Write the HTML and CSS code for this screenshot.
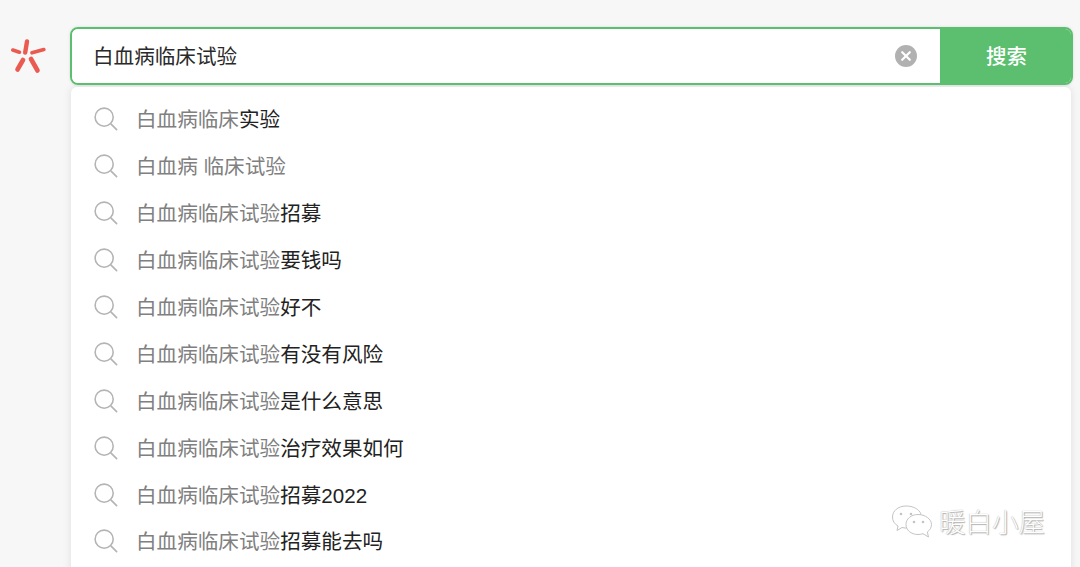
FILE: index.html
```html
<!DOCTYPE html>
<html lang="zh">
<head>
<meta charset="utf-8">
<title>搜索</title>
<link rel="stylesheet" href="styles.css">
</head>
<body>
<div class="page">
  <header class="top">
    <svg class="logo" width="36" height="36" viewBox="0 0 36 36">
      <g stroke="#ea5a50" stroke-linecap="round" fill="none">
        <path d="M17 3.500 L15.200 14.500" stroke-width="4.400"/>
        <path d="M2.800 12 L9.500 14.200" stroke-width="3.600"/>
        <path d="M33.800 11.500 L22 14.800" stroke-width="3.600"/>
        <path d="M13 22 L7.500 31.500" stroke-width="4.600"/>
        <path d="M21 21 L27.500 32.500" stroke-width="4.600"/>
      </g>
    </svg>
    <div class="box">
      <div class="field">
        <span class="query">白血病临床试验</span>
        <svg class="clear" width="24" height="24" viewBox="0 0 24 24">
          <circle cx="12" cy="12" r="11" fill="#b1b1b1"/>
          <path d="M8.200 8.200 L15.800 15.800 M15.800 8.200 L8.200 15.800" stroke="#fff" stroke-width="2.200" stroke-linecap="round"/>
        </svg>
      </div>
      <div class="btn">搜索</div>
    </div>
  </header>
  <ul class="list">
    <li class="row"><svg class="ico"><use href="#s"/></svg><span class="t">白血病临床<b>实验</b></span></li>
    <li class="row"><svg class="ico"><use href="#s"/></svg><span class="t">白血病 临床试验</span></li>
    <li class="row"><svg class="ico"><use href="#s"/></svg><span class="t">白血病临床试验<b>招募</b></span></li>
    <li class="row"><svg class="ico"><use href="#s"/></svg><span class="t">白血病临床试验<b>要钱吗</b></span></li>
    <li class="row"><svg class="ico"><use href="#s"/></svg><span class="t">白血病临床试验<b>好不</b></span></li>
    <li class="row"><svg class="ico"><use href="#s"/></svg><span class="t">白血病临床试验<b>有没有风险</b></span></li>
    <li class="row"><svg class="ico"><use href="#s"/></svg><span class="t">白血病临床试验<b>是什么意思</b></span></li>
    <li class="row"><svg class="ico"><use href="#s"/></svg><span class="t">白血病临床试验<b>治疗效果如何</b></span></li>
    <li class="row"><svg class="ico"><use href="#s"/></svg><span class="t">白血病临床试验<b>招募2022</b></span></li>
    <li class="row"><svg class="ico"><use href="#s"/></svg><span class="t">白血病临床试验<b>招募能去吗</b></span></li>
  </ul>
  <div class="mark">
    <svg width="46" height="36" viewBox="0 0 46 36">
      <g fill="#fff" stroke="#c4c4c4" stroke-width="1">
        <path d="M15 2 C7 2 1.500 7 1.500 13 C1.500 17 3.500 20 7 22 L6 26.500 L11 23.500 C13 24 15 24.200 17 24 L30 10 C28 5 22 2 15 2Z"/>
        <path d="M27 10.500 C20 10.500 15 15 15 20.500 C15 26 20 30.500 27 30.500 C29 30.500 30.500 30.200 32 29.700 L37.500 33 L36.300 28 C39 26 40.500 23.500 40.500 20.500 C40.500 15 34 10.500 27 10.500Z"/>
      </g>
      <circle cx="10" cy="10" r="1.300" fill="#c4c4c4"/>
      <circle cx="20" cy="10" r="1.300" fill="#c4c4c4"/>
      <circle cx="23" cy="18" r="1.300" fill="#c4c4c4"/>
      <circle cx="32" cy="18" r="1.300" fill="#c4c4c4"/>
    </svg>
    <span class="name">暖白小屋</span>
  </div>
</div>
<svg class="defs" width="0" height="0">
  <symbol id="s" viewBox="0 0 26 26">
    <circle cx="11" cy="11" r="9.800" fill="none" stroke="#b4b4b4" stroke-width="1.700"/>
    <path d="M18.500 18.500 L24.500 24.500" stroke="#b4b4b4" stroke-width="1.800" stroke-linecap="round"/>
  </symbol>
</svg>
</body>
</html>
```
FILE: styles.css
```css
* { box-sizing: border-box; }
html, body { margin: 0; height: 100%; }
body {
  background: #f7f7f7;
  font-family: "Liberation Sans", "Noto Sans CJK SC", sans-serif;
  overflow: hidden;
}
.page { position: relative; height: 567px; overflow: hidden; padding: 27px 7px 0 0; }
.top { display: flex; align-items: center; height: 58px; }
.logo { width: 36px; height: 36px; margin: 0 24px 0 10px; flex: none; }
.box {
  flex: 1;
  display: flex;
  height: 58px;
  border-radius: 8px;
  overflow: hidden;
  border: 2px solid #5bbf6f;
  box-shadow: 0 0 3px rgba(0,0,0,.12);
}
.field {
  flex: 1;
  background: #fff;
  display: flex;
  align-items: center;
  justify-content: space-between;
  padding: 0 22px 2px 21px;
}
.query { font-size: 20.6px; color: #2a2a2a; }
.clear { flex: none; margin-top: 2px; }
.btn {
  width: 131px;
  background: #5bbf6f;
  color: #fff;
  font-size: 20.5px;
  font-weight: 500;
  display: flex;
  align-items: center;
  justify-content: center;
  padding: 0 0 2px 2px;
}
.list {
  list-style: none;
  margin: 2px 2px 0 71px;
  padding: 9px 0 0 23px;
  background: #fff;
  height: 500px;
  border-radius: 6px 6px 0 0;
  box-shadow: 0 0 8px rgba(0,0,0,.1);
}
.row { display: flex; align-items: center; height: 46.9px; }
.ico { width: 24px; height: 24px; flex: none; margin-right: 19px; }
.t { font-size: 20.6px; color: #808080; white-space: nowrap; margin-left: -1px; padding-bottom: 2px; }
.t b { font-weight: 400; color: #222; }
.mark {
  position: absolute;
  left: 891px;
  top: 501px;
  display: flex;
  align-items: center;
  gap: 2px;
}
.name {
  font-size: 26.5px;
  color: #fff;
  text-shadow: 0 0 1px #999, 1px 1px 1px #b5b5b5;
  font-weight: 300;
  padding-bottom: 2px;
}
.defs { position: absolute; }
```
